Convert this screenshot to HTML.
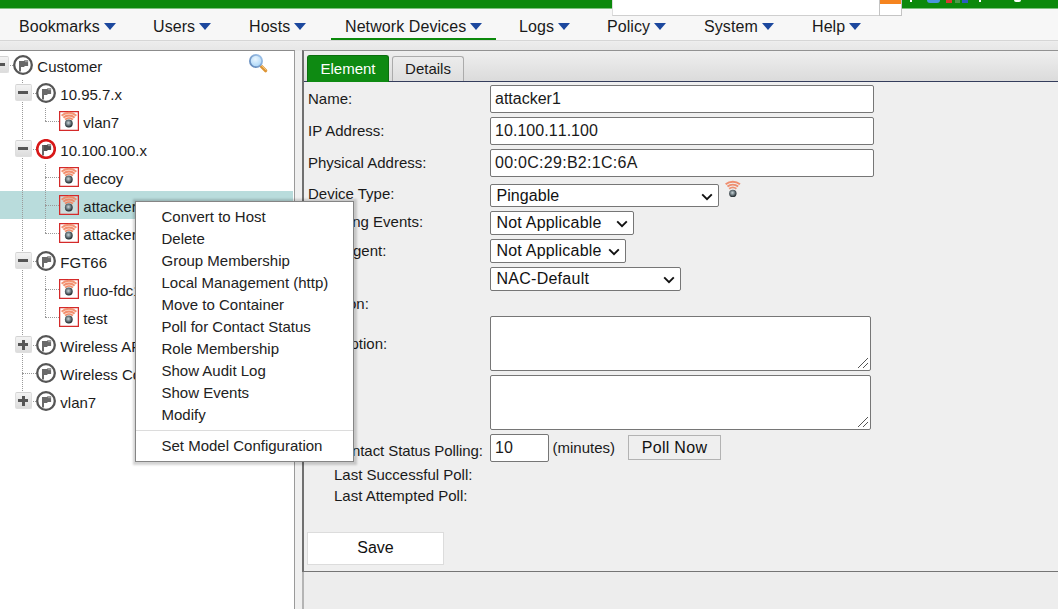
<!DOCTYPE html>
<html><head><meta charset="utf-8">
<style>
*{box-sizing:border-box;margin:0;padding:0}
html,body{width:1058px;height:609px;overflow:hidden;background:#eee;font-family:"Liberation Sans",sans-serif;color:#1c1c1c}
.abs{position:absolute}
#green{left:0;top:0;width:1058px;height:9px;background:#0b890b;border-bottom:1px solid #7ec27e}
#srch{left:612px;top:0;width:267px;height:16px;background:#fff;border-bottom:1px solid #cfcfcf;border-left:1px solid #ddd}
#srchbtn{left:879px;top:0;width:23px;height:16px;background:#fff;border:1px solid #c4c4c4;border-top:0}
#srchbtn i{position:absolute;left:0;top:0;width:21px;height:4px;background:#f5841f}
#menubar{left:0;top:9px;width:1058px;height:32px;background:#f7f7f7;border-bottom:1px solid #d6d6d6}
.mi{position:absolute;top:18px;font-size:16px;line-height:18px;white-space:nowrap;color:#1a1a1a;letter-spacing:.08px}
.tri{display:inline-block;width:0;height:0;border-left:6.5px solid transparent;border-right:6.5px solid transparent;border-top:7px solid #1c489e;margin-left:4px;vertical-align:2px}
#band{left:0;top:42px;width:1058px;height:9px;background:linear-gradient(#ececec,#e6e6e6)}
#tree{left:-2px;top:50px;width:297px;height:570px;background:#fff;border:1px solid #9a9a9a;border-top-color:#8c8c8c;overflow:hidden}
#treein{position:absolute;left:1px;top:-51px;width:300px;height:700px}
#split{left:295px;top:51px;width:8px;height:560px;background:#efefef}
#right{left:302px;top:50px;width:760px;height:522px;background:#efefef;border:1px solid #757575;border-top-color:#929292;border-left:2px solid #707070}
#tabbar{left:304px;top:51px;width:754px;height:31px;background:linear-gradient(#efefef,#dbdbdb);border-bottom:1px solid #343d5c}
#below{left:302px;top:572px;width:760px;height:40px;background:#ededed;border-left:2px solid #b4b4b4}
.tab{position:absolute;font-size:15px;line-height:17px;text-align:center;border-radius:3px 3px 0 0}
#t1{left:307px;top:55px;width:82px;height:27px;background:#0e8a12;color:#fff;padding-top:4px;border:1px solid #0a6e0d;border-bottom:0}
#t2{left:392px;top:56px;width:72px;height:25px;background:linear-gradient(#ececec,#dedede);color:#1a1a1a;padding-top:3px;border:1px solid #ababab;border-bottom:0}
.sel{background:#b9dcdc}
.vl{position:absolute;width:0;border-left:1px dotted #9a9a9a}
.hl{position:absolute;height:0;border-top:1px dotted #9a9a9a}
.exp{position:absolute;width:17px;height:17px;border-radius:2px;background:linear-gradient(#f3f3f3,#dcdcdc);border:1px solid #dedede;border-top-color:#d2d2d2}
.exp .mh{position:absolute;left:2.3px;top:6.8px;width:10px;height:2.5px;background:#555}
.exp .mv{position:absolute;left:6px;top:3px;width:2.5px;height:10px;background:#555}
.tt{position:absolute;font-size:15px;line-height:18px;white-space:nowrap;color:#1c1c1c}
#mag{left:246px;top:52px}
#menu{left:135px;top:201px;width:219px;height:261px;background:#fff;border:1px solid #858585;box-shadow:0 0 2px 2.5px rgba(0,0,0,.17)}
.cm{position:absolute;left:25.5px;font-size:15px;line-height:18px;white-space:nowrap;color:#222}
#msep{position:absolute;left:0;top:228px;width:217px;height:1px;background:#dcdcdc}
.lb{position:absolute;font-size:15px;line-height:18px;white-space:nowrap;color:#1a1a1a}
.inp{position:absolute;background:#fff;border:1px solid #767676;border-radius:2px;font-size:16px;line-height:18px;padding:4px 0 0 4px;color:#1a1a1a}
.selbox{position:absolute;background:#fff;border:1px solid #767676;border-radius:2px;font-size:16px;line-height:18px;color:#111}
.selbox span{position:absolute;left:5.5px;top:1.5px;white-space:nowrap}
.chev{position:absolute;right:5px;top:8px}
.ta{position:absolute;background:#fff;border:1px solid #767676;border-radius:2px}
.ta svg{position:absolute;right:1px;bottom:1px}
#poll{left:628px;top:435px;width:93px;height:25px;background:#efefef;border:1px solid #b3b3b3;font-size:16px;line-height:18px;text-align:center;padding-top:3px;color:#111;letter-spacing:.3px}
#save{left:307px;top:532px;width:137px;height:33px;background:#fff;border:1px solid #dcdcdc;font-size:16px;line-height:18px;text-align:center;padding-top:6px;color:#111}
</style></head><body>
<svg width="0" height="0" style="position:absolute"><defs>
<radialGradient id="sph" cx=".45" cy=".42" r=".62"><stop offset="0" stop-color="#c9d4d8"/><stop offset=".4" stop-color="#7d8b91"/><stop offset=".85" stop-color="#2a3338"/><stop offset="1" stop-color="#1a2226"/></radialGradient>
<radialGradient id="lens" cx=".45" cy=".35" r=".75"><stop offset="0" stop-color="#eaf6ff"/><stop offset="1" stop-color="#9fd0f6"/></radialGradient>
<linearGradient id="ring" x1="1" y1="0" x2="0" y2="1"><stop offset="0" stop-color="#a4c8ee"/><stop offset="1" stop-color="#5d84b6"/></linearGradient>
</defs></svg>
<div class="abs" id="green"></div>
<div class="abs" style="left:910px;top:0;width:2px;height:2px;background:#fff"></div>
<div class="abs" style="left:927px;top:0;width:13px;height:3px;background:#4a94de;border-radius:0 0 7px 7px"></div>
<div class="abs" style="left:946px;top:0;width:6px;height:3px;background:#d6392f"></div>
<div class="abs" style="left:955px;top:0;width:5px;height:3px;background:#4a9a4a"></div>
<div class="abs" style="left:962px;top:0;width:6px;height:3px;background:#2a5cc0"></div>
<div class="abs" style="left:979px;top:0;width:2px;height:2px;background:#fff"></div>
<div class="abs" style="left:1014px;top:0;width:7px;height:2px;background:#fff;border-radius:0 0 3px 3px"></div>
<div class="abs" id="menubar"></div>
<div class="abs" id="srch"></div>
<div class="abs" id="srchbtn"><i></i></div>
<div class="mi" style="left:19px">Bookmarks<span class="tri"></span></div>
<div class="mi" style="left:153px">Users<span class="tri"></span></div>
<div class="mi" style="left:249px">Hosts<span class="tri"></span></div>
<div class="mi" style="left:345px">Network Devices<span class="tri"></span></div>
<div class="mi" style="left:519px">Logs<span class="tri"></span></div>
<div class="mi" style="left:607px">Policy<span class="tri"></span></div>
<div class="mi" style="left:704px">System<span class="tri"></span></div>
<div class="mi" style="left:812px">Help<span class="tri"></span></div>
<div class="abs" style="left:331px;top:38px;width:165px;height:2px;background:#0b890b"></div>
<div class="abs" id="band"></div>
<div class="abs" id="tree"><div id="treein">
<div class="abs sel" style="left:0;top:191px;width:293px;height:28px"></div>
<div class="vl" style="left:22px;top:80px;height:313px"></div>
<div class="vl" style="left:45px;top:108px;height:13px"></div>
<div class="hl" style="left:45px;top:121px;width:14px"></div>
<div class="vl" style="left:45px;top:164px;height:69px"></div>
<div class="hl" style="left:45px;top:177px;width:14px"></div>
<div class="hl" style="left:45px;top:205px;width:14px"></div>
<div class="hl" style="left:45px;top:233px;width:14px"></div>
<div class="vl" style="left:45px;top:276px;height:41px"></div>
<div class="hl" style="left:45px;top:289px;width:14px"></div>
<div class="hl" style="left:45px;top:317px;width:14px"></div>
<div class="hl" style="left:31px;top:93px;width:5px"></div>
<div class="hl" style="left:31px;top:149px;width:5px"></div>
<div class="hl" style="left:31px;top:261px;width:5px"></div>
<div class="hl" style="left:31px;top:345px;width:5px"></div>
<div class="hl" style="left:31px;top:401px;width:5px"></div>
<div class="hl" style="left:22px;top:373px;width:14px"></div>
<div class="hl" style="left:8px;top:65px;width:5px"></div>
<div class="exp" style="left:-8px;top:55.5px"><i class="mh"></i></div>
<div class="abs" style="left:13px;top:55px;width:20px;height:20px"><svg width="20" height="20" viewBox="0 0 20 20"><circle cx="10" cy="10" r="8.8" fill="#fff" stroke="#555" stroke-width="2.3"/><path d="M7 6V16.6" stroke="#444" stroke-width="1.6"/><path d="M7.8 5.9h3.2l.9-.9h3.2v6.1h-3.2l-.9.9h-3.2z" fill="#6a6a6a"/><path d="M11.9 5h3.2v2.2h-3.2z" fill="#bbb" opacity=".6"/></svg></div>
<div class="tt" style="left:37.3px;top:58px">Customer</div>
<div class="exp" style="left:15px;top:83.5px"><i class="mh"></i></div>
<div class="abs" style="left:36px;top:83px;width:20px;height:20px"><svg width="20" height="20" viewBox="0 0 20 20"><circle cx="10" cy="10" r="8.8" fill="#fff" stroke="#555" stroke-width="2.3"/><path d="M7 6V16.6" stroke="#444" stroke-width="1.6"/><path d="M7.8 5.9h3.2l.9-.9h3.2v6.1h-3.2l-.9.9h-3.2z" fill="#6a6a6a"/><path d="M11.9 5h3.2v2.2h-3.2z" fill="#bbb" opacity=".6"/></svg></div>
<div class="tt" style="left:60.3px;top:86px">10.95.7.x</div>
<div class="abs" style="left:59px;top:111px;width:20px;height:20px"><svg width="20" height="20" viewBox="0 0 20 20"><rect x=".6" y=".6" width="18.8" height="18.8" fill="#fff" stroke="#d42a2a" stroke-width="1.3"/><path d="M1.97 3.88A12.0 12.0 0 0 1 18.03 3.88L13.08 9.38A4.6 4.6 0 0 0 6.92 9.38Z" fill="#f7a589" opacity=".3"/><g fill="none" stroke="#f07f5a" stroke-linecap="butt"><path d="M2.64 4.63A11.0 11.0 0 0 1 17.36 4.63" stroke-width="2" opacity=".8"/><path d="M4.45 6.63A8.3 8.3 0 0 1 15.55 6.63" stroke-width="1.9" opacity=".85"/><path d="M6.19 8.56A5.7 5.7 0 0 1 13.81 8.56" stroke-width="1.8" opacity=".9"/></g><circle cx="9.8" cy="12.5" r="3.9" fill="url(#sph)"/></svg></div>
<div class="tt" style="left:83.3px;top:114px">vlan7</div>
<div class="exp" style="left:15px;top:139.5px"><i class="mh"></i></div>
<div class="abs" style="left:36px;top:139px;width:20px;height:20px"><svg width="20" height="20" viewBox="0 0 20 20"><circle cx="10" cy="10" r="8.8" fill="#fff" stroke="#d81818" stroke-width="2.6"/><path d="M7 6V16.6" stroke="#444" stroke-width="1.6"/><path d="M7.8 5.9h3.2l.9-.9h3.2v6.1h-3.2l-.9.9h-3.2z" fill="#505050"/><path d="M11.9 5h3.2v2.2h-3.2z" fill="#bbb" opacity=".6"/></svg></div>
<div class="tt" style="left:60.3px;top:142px">10.100.100.x</div>
<div class="abs" style="left:59px;top:167px;width:20px;height:20px"><svg width="20" height="20" viewBox="0 0 20 20"><rect x=".6" y=".6" width="18.8" height="18.8" fill="#fff" stroke="#d42a2a" stroke-width="1.3"/><path d="M1.97 3.88A12.0 12.0 0 0 1 18.03 3.88L13.08 9.38A4.6 4.6 0 0 0 6.92 9.38Z" fill="#f7a589" opacity=".3"/><g fill="none" stroke="#f07f5a" stroke-linecap="butt"><path d="M2.64 4.63A11.0 11.0 0 0 1 17.36 4.63" stroke-width="2" opacity=".8"/><path d="M4.45 6.63A8.3 8.3 0 0 1 15.55 6.63" stroke-width="1.9" opacity=".85"/><path d="M6.19 8.56A5.7 5.7 0 0 1 13.81 8.56" stroke-width="1.8" opacity=".9"/></g><circle cx="9.8" cy="12.5" r="3.9" fill="url(#sph)"/></svg></div>
<div class="tt" style="left:83.3px;top:170px">decoy</div>
<div class="abs" style="left:59px;top:195px;width:20px;height:20px"><svg width="20" height="20" viewBox="0 0 20 20"><rect x=".6" y=".6" width="18.8" height="18.8" fill="#cddcdc" stroke="#d42a2a" stroke-width="1.3"/><path d="M1.97 3.88A12.0 12.0 0 0 1 18.03 3.88L13.08 9.38A4.6 4.6 0 0 0 6.92 9.38Z" fill="#f7a589" opacity=".3"/><g fill="none" stroke="#f07f5a" stroke-linecap="butt"><path d="M2.64 4.63A11.0 11.0 0 0 1 17.36 4.63" stroke-width="2" opacity=".8"/><path d="M4.45 6.63A8.3 8.3 0 0 1 15.55 6.63" stroke-width="1.9" opacity=".85"/><path d="M6.19 8.56A5.7 5.7 0 0 1 13.81 8.56" stroke-width="1.8" opacity=".9"/></g><circle cx="9.8" cy="12.5" r="3.9" fill="url(#sph)"/></svg></div>
<div class="tt" style="left:83.3px;top:198px">attacker1</div>
<div class="abs" style="left:59px;top:223px;width:20px;height:20px"><svg width="20" height="20" viewBox="0 0 20 20"><rect x=".6" y=".6" width="18.8" height="18.8" fill="#fff" stroke="#d42a2a" stroke-width="1.3"/><path d="M1.97 3.88A12.0 12.0 0 0 1 18.03 3.88L13.08 9.38A4.6 4.6 0 0 0 6.92 9.38Z" fill="#f7a589" opacity=".3"/><g fill="none" stroke="#f07f5a" stroke-linecap="butt"><path d="M2.64 4.63A11.0 11.0 0 0 1 17.36 4.63" stroke-width="2" opacity=".8"/><path d="M4.45 6.63A8.3 8.3 0 0 1 15.55 6.63" stroke-width="1.9" opacity=".85"/><path d="M6.19 8.56A5.7 5.7 0 0 1 13.81 8.56" stroke-width="1.8" opacity=".9"/></g><circle cx="9.8" cy="12.5" r="3.9" fill="url(#sph)"/></svg></div>
<div class="tt" style="left:83.3px;top:226px">attacker2</div>
<div class="exp" style="left:15px;top:251.5px"><i class="mh"></i></div>
<div class="abs" style="left:36px;top:251px;width:20px;height:20px"><svg width="20" height="20" viewBox="0 0 20 20"><circle cx="10" cy="10" r="8.8" fill="#fff" stroke="#555" stroke-width="2.3"/><path d="M7 6V16.6" stroke="#444" stroke-width="1.6"/><path d="M7.8 5.9h3.2l.9-.9h3.2v6.1h-3.2l-.9.9h-3.2z" fill="#6a6a6a"/><path d="M11.9 5h3.2v2.2h-3.2z" fill="#bbb" opacity=".6"/></svg></div>
<div class="tt" style="left:60.3px;top:254px">FGT66</div>
<div class="abs" style="left:59px;top:279px;width:20px;height:20px"><svg width="20" height="20" viewBox="0 0 20 20"><rect x=".6" y=".6" width="18.8" height="18.8" fill="#fff" stroke="#d42a2a" stroke-width="1.3"/><path d="M1.97 3.88A12.0 12.0 0 0 1 18.03 3.88L13.08 9.38A4.6 4.6 0 0 0 6.92 9.38Z" fill="#f7a589" opacity=".3"/><g fill="none" stroke="#f07f5a" stroke-linecap="butt"><path d="M2.64 4.63A11.0 11.0 0 0 1 17.36 4.63" stroke-width="2" opacity=".8"/><path d="M4.45 6.63A8.3 8.3 0 0 1 15.55 6.63" stroke-width="1.9" opacity=".85"/><path d="M6.19 8.56A5.7 5.7 0 0 1 13.81 8.56" stroke-width="1.8" opacity=".9"/></g><circle cx="9.8" cy="12.5" r="3.9" fill="url(#sph)"/></svg></div>
<div class="tt" style="left:83.3px;top:282px">rluo-fdc1</div>
<div class="abs" style="left:59px;top:307px;width:20px;height:20px"><svg width="20" height="20" viewBox="0 0 20 20"><rect x=".6" y=".6" width="18.8" height="18.8" fill="#fff" stroke="#d42a2a" stroke-width="1.3"/><path d="M1.97 3.88A12.0 12.0 0 0 1 18.03 3.88L13.08 9.38A4.6 4.6 0 0 0 6.92 9.38Z" fill="#f7a589" opacity=".3"/><g fill="none" stroke="#f07f5a" stroke-linecap="butt"><path d="M2.64 4.63A11.0 11.0 0 0 1 17.36 4.63" stroke-width="2" opacity=".8"/><path d="M4.45 6.63A8.3 8.3 0 0 1 15.55 6.63" stroke-width="1.9" opacity=".85"/><path d="M6.19 8.56A5.7 5.7 0 0 1 13.81 8.56" stroke-width="1.8" opacity=".9"/></g><circle cx="9.8" cy="12.5" r="3.9" fill="url(#sph)"/></svg></div>
<div class="tt" style="left:83.3px;top:310px">test</div>
<div class="exp" style="left:15px;top:335.5px"><i class="mh"></i><i class="mv"></i></div>
<div class="abs" style="left:36px;top:335px;width:20px;height:20px"><svg width="20" height="20" viewBox="0 0 20 20"><circle cx="10" cy="10" r="8.8" fill="#fff" stroke="#555" stroke-width="2.3"/><path d="M7 6V16.6" stroke="#444" stroke-width="1.6"/><path d="M7.8 5.9h3.2l.9-.9h3.2v6.1h-3.2l-.9.9h-3.2z" fill="#6a6a6a"/><path d="M11.9 5h3.2v2.2h-3.2z" fill="#bbb" opacity=".6"/></svg></div>
<div class="tt" style="left:60.3px;top:338px">Wireless APs</div>
<div class="abs" style="left:36px;top:363px;width:20px;height:20px"><svg width="20" height="20" viewBox="0 0 20 20"><circle cx="10" cy="10" r="8.8" fill="#fff" stroke="#555" stroke-width="2.3"/><path d="M7 6V16.6" stroke="#444" stroke-width="1.6"/><path d="M7.8 5.9h3.2l.9-.9h3.2v6.1h-3.2l-.9.9h-3.2z" fill="#6a6a6a"/><path d="M11.9 5h3.2v2.2h-3.2z" fill="#bbb" opacity=".6"/></svg></div>
<div class="tt" style="left:60.3px;top:366px">Wireless Controllers</div>
<div class="exp" style="left:15px;top:391.5px"><i class="mh"></i><i class="mv"></i></div>
<div class="abs" style="left:36px;top:391px;width:20px;height:20px"><svg width="20" height="20" viewBox="0 0 20 20"><circle cx="10" cy="10" r="8.8" fill="#fff" stroke="#555" stroke-width="2.3"/><path d="M7 6V16.6" stroke="#444" stroke-width="1.6"/><path d="M7.8 5.9h3.2l.9-.9h3.2v6.1h-3.2l-.9.9h-3.2z" fill="#6a6a6a"/><path d="M11.9 5h3.2v2.2h-3.2z" fill="#bbb" opacity=".6"/></svg></div>
<div class="tt" style="left:60.3px;top:394px">vlan7</div>
<div class="abs" id="mag"><svg width="24" height="24" viewBox="0 0 24 24"><path d="M14.6 13.6L19.6 18.6" stroke="#dd9434" stroke-width="3.4" stroke-linecap="round"/><path d="M14.9 12.9L20 18" stroke="#f3c77c" stroke-width="1" stroke-linecap="round"/><circle cx="10" cy="9" r="6.1" fill="url(#lens)" stroke="url(#ring)" stroke-width="1.8"/></svg></div>
</div></div>
<div class="abs" id="split"></div>
<div class="abs" id="right"></div>
<div class="abs" id="tabbar"></div>
<div class="abs" id="below"></div>
<div class="tab" id="t1">Element</div>
<div class="tab" id="t2">Details</div>

<div class="lb" style="left:308px;top:90px">Name:</div>
<div class="lb" style="left:308px;top:122px">IP Address:</div>
<div class="lb" style="left:308px;top:154px">Physical Address:</div>
<div class="lb" style="left:308px;top:185px">Device Type:</div>
<div class="lb" style="left:308px;top:213px">Incoming Events:</div>
<div class="lb" style="left:308px;top:242px">SSO Agent:</div>
<div class="lb" style="left:308px;top:269px">Role:</div>
<div class="lb" style="left:308px;top:295px">Location:</div>
<div class="lb" style="left:308px;top:335px">Description:</div>
<div class="lb" style="left:308px;top:392px">Note:</div>
<div class="lb" style="left:333px;top:442px;letter-spacing:-.08px">Contact Status Polling:</div>
<div class="lb" style="left:334px;top:466px">Last Successful Poll:</div>
<div class="lb" style="left:334px;top:487px">Last Attempted Poll:</div>

<div class="inp" style="left:490px;top:85px;width:384px;height:28px">attacker1</div>
<div class="inp" style="left:490px;top:117px;width:384px;height:28px;font-kerning:none;letter-spacing:.05px">10.100.11.100</div>
<div class="inp" style="left:490px;top:149px;width:384px;height:28px;font-kerning:none;letter-spacing:.28px">00:0C:29:B2:1C:6A</div>
<div class="selbox" style="left:490px;top:184px;width:229px;height:23px"><span style="letter-spacing:0.07px">Pingable</span><svg class="chev" width="12" height="8" viewBox="0 0 12 8"><path d="M1.2 1.4L6 6.2L10.8 1.4" fill="none" stroke="#111" stroke-width="1.9"/></svg></div>
<div class="selbox" style="left:490px;top:211px;width:143.5px;height:24px"><span style="letter-spacing:0.2px">Not Applicable</span><svg class="chev" width="12" height="8" viewBox="0 0 12 8"><path d="M1.2 1.4L6 6.2L10.8 1.4" fill="none" stroke="#111" stroke-width="1.9"/></svg></div>
<div class="selbox" style="left:490px;top:239px;width:136px;height:24px"><span style="letter-spacing:0.2px">Not Applicable</span><svg class="chev" width="12" height="8" viewBox="0 0 12 8"><path d="M1.2 1.4L6 6.2L10.8 1.4" fill="none" stroke="#111" stroke-width="1.9"/></svg></div>
<div class="selbox" style="left:490px;top:267px;width:191px;height:24px"><span style="letter-spacing:0.26px">NAC-Default</span><svg class="chev" width="12" height="8" viewBox="0 0 12 8"><path d="M1.2 1.4L6 6.2L10.8 1.4" fill="none" stroke="#111" stroke-width="1.9"/></svg></div>
<div class="abs" style="left:724px;top:180px;width:18px;height:18px"><svg width="18" height="18" viewBox="0 0 18 18"><g fill="none" stroke="#ee7c58"><path d="M1.66 4.26A11.6 11.6 0 0 1 15.94 4.26" stroke-width="2" opacity=".85"/><path d="M3.44 6.54A8.7 8.7 0 0 1 14.16 6.54" stroke-width="1.9" opacity=".85"/><path d="M5.17 8.75A5.9 5.9 0 0 1 12.43 8.75" stroke-width="1.8" opacity=".8"/></g><circle cx="8.8" cy="13.4" r="3.7" fill="url(#sph)"/></svg></div>
<div class="ta" style="left:490px;top:316px;width:381px;height:55px"><svg width="12" height="12" viewBox="0 0 12 12"><path d="M11 1L1 11M11 6L6 11" stroke="#555" stroke-width="1"/></svg></div>
<div class="ta" style="left:490px;top:375px;width:381px;height:55px"><svg width="12" height="12" viewBox="0 0 12 12"><path d="M11 1L1 11M11 6L6 11" stroke="#555" stroke-width="1"/></svg></div>
<div class="inp" style="left:490px;top:434px;width:59px;height:28px">10</div>
<div class="lb" style="left:552.5px;top:439px">(minutes)</div>
<div class="abs" id="poll">Poll Now</div>
<div class="abs" id="save">Save</div>

<div class="abs" id="menu"><div class="cm" style="top:6px">Convert to Host</div><div class="cm" style="top:28px">Delete</div><div class="cm" style="top:50px">Group Membership</div><div class="cm" style="top:72px">Local Management (http)</div><div class="cm" style="top:94px">Move to Container</div><div class="cm" style="top:116px">Poll for Contact Status</div><div class="cm" style="top:138px">Role Membership</div><div class="cm" style="top:160px">Show Audit Log</div><div class="cm" style="top:182px">Show Events</div><div class="cm" style="top:204px">Modify</div><div id="msep"></div><div class="cm" style="top:235px">Set Model Configuration</div></div>
</body></html>
